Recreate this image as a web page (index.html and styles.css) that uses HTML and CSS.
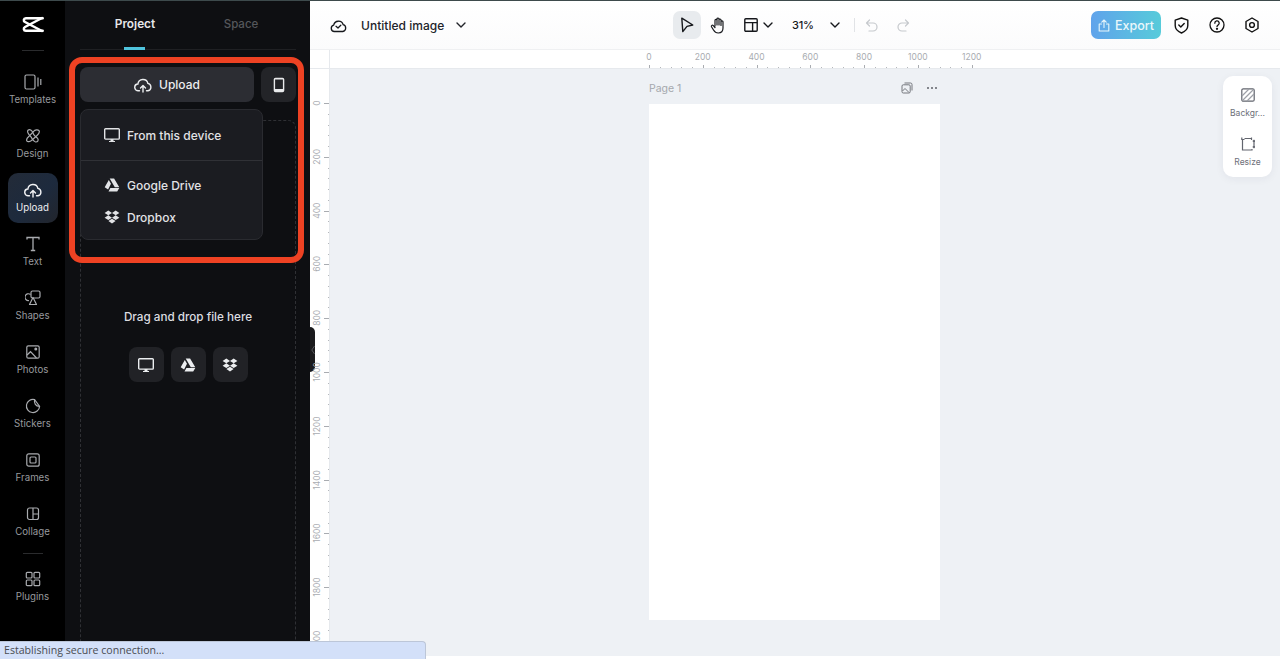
FILE: index.html
```html
<!DOCTYPE html>
<html lang="en">
<head>
<meta charset="utf-8">
<title>Untitled image</title>
<link rel="stylesheet" href="styles.css">
</head>
<body>
<svg class="defs" width="0" height="0" aria-hidden="true">
  <defs>
    <symbol id="i-monitor" viewBox="0 0 16 16"><path d="M1.600 1.700h12.800a.9.9 0 0 1 .9.9v8.600a.9.9 0 0 1-.9.9H1.600a.9.9 0 0 1-.9-.9V2.600a.9.9 0 0 1 .9-.9z" fill="none" stroke="currentColor" stroke-width="1.400"/><path d="M5 14h6v.9H5zM6.500 12h3v2h-3z" fill="currentColor"/></symbol>
    <symbol id="i-drive" viewBox="0 0 16 16"><path d="M5.700 1.500h4.400l5.200 8.700h-4.500zM4.800 2.900l2.200 3.900-2.900 5.600L.7 10.300zM6.400 10.900h8.900l-2.100 3.500H4.500z" fill="currentColor"/></symbol>
    <symbol id="i-dropbox" viewBox="0 0 16 16"><path d="M4.300 1.500 8 3.900 4.300 6.300.6 3.900zM11.700 1.500 15.400 3.900 11.700 6.300 8 3.900zM4.300 6.300 8 8.700 4.300 11.100.6 8.700zM11.700 6.300 15.400 8.700 11.700 11.100 8 8.700zM4.400 12 8 9.700l3.600 2.300L8 14.500z" fill="currentColor"/></symbol>
    <symbol id="i-upcloud" viewBox="0 0 18 16"><path d="M5.500 13.800H4.400A3.400 3.400 0 0 1 3.900 7a5.100 5.100 0 0 1 10-.6 3.800 3.800 0 0 1 .1 7.400h-1.500" fill="none" stroke="currentColor" stroke-width="1.400" stroke-linecap="round"/><path d="M9 15V9M6.500 11 9 8.500l2.500 2.500" fill="none" stroke="currentColor" stroke-width="1.400" stroke-linecap="round" stroke-linejoin="round"/></symbol>
    <symbol id="i-chev" viewBox="0 0 10 6"><path d="M1 1l4 4 4-4" fill="none" stroke="currentColor" stroke-width="1.400" stroke-linecap="round" stroke-linejoin="round"/></symbol>
  </defs>
</svg>
<div class="app">
  <nav class="rail">
    <div class="logo">
      <svg width="22" height="17" viewBox="0 0 22 17" fill="none" stroke="#fff" stroke-width="2.500" stroke-linecap="round"><path d="M20.700 2.300H3.800C1.500 2.300 1.200 5 3 6l17 9"/><path d="M20.700 14.700H3.800C1.500 14.700 1.200 12 3 11l17-9"/></svg>
    </div>
    <a class="nav-item">
      <svg width="18" height="16" viewBox="0 0 18 16" fill="none" stroke="currentColor" stroke-width="1.200"><rect x="1" y="1" width="10" height="14" rx="1.500"/><path d="M14 3.500v9M16.800 5v6"/></svg>
      <span>Templates</span>
    </a>
    <a class="nav-item">
      <svg width="16" height="16" viewBox="0 0 16 16" fill="none" stroke="currentColor" stroke-width="1.200"><path d="M3 2.200c2-1.500 4.500.5 5 3 .5 2.500 3 3.500 4.500 5 1.500 2 .2 4-2 3.800-2.300-.3-3-2.600-4-4.400C5.500 7.800 1 5 3 2.200z"/><path d="M8.500 3.500c1.500-2 4.500-2.200 5.500-.8 1 1.500-.5 3.500-2 4.800l-5.500 5c-1.500 1.200-3.800 1.500-4.500.6-1-1.300.3-3.300 2-4.800z"/></svg>
      <span>Design</span>
    </a>
    <a class="nav-item active">
      <svg width="18" height="16"><use href="#i-upcloud"/></svg>
      <span>Upload</span>
    </a>
    <a class="nav-item">
      <svg width="16" height="16" viewBox="0 0 16 16" fill="none" stroke="currentColor" stroke-width="1.300"><path d="M2 3.500V1.500h12v2M8 1.500v13M5.800 14.500h4.400"/></svg>
      <span>Text</span>
    </a>
    <a class="nav-item">
      <svg width="16" height="16" viewBox="0 0 16 16" fill="none" stroke="currentColor" stroke-width="1.200"><path d="M5.500 4.500A3.400 3.400 0 1 0 4 10.500"/><rect x="6" y="1" width="9" height="7" rx="1.500"/><path d="M8 7.500l3.500 7h-7z" stroke-linejoin="round"/></svg>
      <span>Shapes</span>
    </a>
    <a class="nav-item">
      <svg width="16" height="16" viewBox="0 0 16 16" fill="none" stroke="currentColor" stroke-width="1.200"><rect x="1.800" y="1.800" width="12.400" height="12.400" rx="1.500"/><circle cx="10.800" cy="5" r=".9" fill="currentColor"/><path d="M2 11l3.500-3.300 6 6.300"/></svg>
      <span>Photos</span>
    </a>
    <a class="nav-item">
      <svg width="16" height="16" viewBox="0 0 16 16" fill="none" stroke="currentColor" stroke-width="1.200"><path d="M9.500 1.500A6.600 6.600 0 1 0 14.600 8.500z"/><path d="M9.500 1.500c-.5 4 1 6.500 5.100 7"/></svg>
      <span>Stickers</span>
    </a>
    <a class="nav-item">
      <svg width="16" height="16" viewBox="0 0 16 16" fill="none" stroke="currentColor" stroke-width="1.200"><rect x="1.800" y="1.800" width="12.400" height="12.400" rx="2"/><rect x="5" y="5" width="6" height="6" rx="1"/></svg>
      <span>Frames</span>
    </a>
    <a class="nav-item">
      <svg width="16" height="16" viewBox="0 0 16 16" fill="none" stroke="currentColor" stroke-width="1.200"><rect x="2.500" y="2" width="11" height="11.500" rx="2"/><path d="M8 2v11.500M8 8h5.500"/></svg>
      <span>Collage</span>
    </a>
    <div class="rail-sep"></div>
    <a class="nav-item">
      <svg width="16" height="16" viewBox="0 0 16 16" fill="none" stroke="currentColor" stroke-width="1.200"><rect x="1.300" y="1.300" width="5.700" height="5.700" rx="1"/><rect x="9" y="1.300" width="5.700" height="5.700" rx="1"/><rect x="1.300" y="9" width="5.700" height="5.700" rx="1"/><rect x="9" y="9" width="5.700" height="5.700" rx="1"/></svg>
      <span>Plugins</span>
    </a>
  </nav>

  <aside class="panel">
    <div class="tabs">
      <div class="tab current">Project</div>
      <div class="tab">Space</div>
    </div>
    <div class="upload-row">
      <button class="upload-btn">
        <svg width="18" height="16"><use href="#i-upcloud"/></svg>
        Upload
      </button>
      <button class="phone-btn">
        <svg width="12" height="16" viewBox="0 0 12 16"><path fill-rule="evenodd" d="M2.500.7h7A1.800 1.800 0 0 1 11.300 2.500v11a1.800 1.800 0 0 1-1.800 1.800h-7A1.800 1.800 0 0 1 .7 13.500v-11A1.800 1.800 0 0 1 2.500.7zM2.100 2.400v9.700h7.800V2.400z" fill="currentColor"/></svg>
      </button>
    </div>
    <div class="dropzone">
      <p class="drop-text">Drag and drop file here</p>
      <div class="drop-actions">
        <span class="drop-btn"><svg width="16" height="16"><use href="#i-monitor"/></svg></span>
        <span class="drop-btn"><svg width="16" height="16"><use href="#i-drive"/></svg></span>
        <span class="drop-btn"><svg width="16" height="16"><use href="#i-dropbox"/></svg></span>
      </div>
    </div>

    <div class="menu">
      <div class="menu-group first">
        <div class="menu-row"><svg width="16" height="16"><use href="#i-monitor"/></svg>From this device</div>
      </div>
      <div class="menu-group">
        <div class="menu-row"><svg width="16" height="16"><use href="#i-drive"/></svg>Google Drive</div>
        <div class="menu-row"><svg width="16" height="16"><use href="#i-dropbox"/></svg>Dropbox</div>
      </div>
    </div>
    <div class="highlight"></div>
    <div class="handle"><svg width="4" height="10" viewBox="0 0 4 10"><path d="M3.500 1 .8 5l2.700 4" fill="none" stroke="#55565a" stroke-width="1"/></svg></div>
  </aside>

  <main class="work">
    <header class="topbar">
      <div class="doc">
        <svg class="doc-cloud" width="17" height="15" viewBox="0 0 17 15" fill="none" stroke="#16181c" stroke-width="1.300"><path d="M4.300 13.500a3.200 3.200 0 0 1-.6-6.300 4.900 4.900 0 0 1 9.500-.5 3.500 3.500 0 0 1-.4 6.800z" stroke-linejoin="round"/><path d="M6 8.300l2 1.700 2.800-2.800" stroke-linecap="round" stroke-linejoin="round"/></svg>
        <span class="doc-name">Untitled image</span>
        <svg class="doc-chev" width="10" height="6"><use href="#i-chev"/></svg>
      </div>
      <div class="tools">
        <span class="tool selected"><svg width="14" height="16" viewBox="0 0 14 16" fill="none" stroke="#16181c" stroke-width="1.400" stroke-linejoin="round"><path d="M1.800 1.200 12.800 8 7 9.400 2.800 14.600z"/></svg></span>
        <span class="tool hand"><svg width="16" height="17" viewBox="0 0 16 17" fill="none" stroke="#16181c" stroke-width="1.200" stroke-linecap="round" stroke-linejoin="round"><path d="M5 9V3.300a1 1 0 0 1 2 0V8M7 8V2a1 1 0 0 1 2 0v6M9 8V3a1 1 0 0 1 2 0v5.500M11 8.500V4.800a1 1 0 0 1 2 0V11c0 3-2 5-4.800 5-2.400 0-3.500-1-4.700-3L1.500 9.800c-.6-1.200.9-2.200 1.800-1.200L5 10.500"/></svg></span>
        <span class="tool layout">
          <svg width="14" height="14" viewBox="0 0 14 14" fill="none" stroke="#16181c" stroke-width="1.400"><rect x=".8" y=".8" width="12.400" height="12.400" rx="1"/><path d="M.8 4.600h12.400M8.600 4.600v8.600"/></svg>
          <svg width="10" height="6"><use href="#i-chev"/></svg>
        </span>
        <span class="zoom-val">31%</span>
        <svg class="zoom-chev" width="10" height="6"><use href="#i-chev"/></svg>
        <span class="tool-sep"></span>
        <svg class="undo" width="14" height="13" viewBox="0 0 14 13" fill="none" stroke="#c6c9cd" stroke-width="1.200" stroke-linecap="round" stroke-linejoin="round"><path d="M4.500 1 1.500 4l3 3M1.500 4H8a4 4 0 0 1 0 8H4"/></svg>
        <svg class="redo" width="14" height="13" viewBox="0 0 14 13" fill="none" stroke="#c6c9cd" stroke-width="1.200" stroke-linecap="round" stroke-linejoin="round"><path d="M9.500 1l3 3-3 3M12.500 4H6a4 4 0 0 0 0 8h4"/></svg>
      </div>
      <div class="actions">
        <button class="export">
          <svg width="12" height="13" viewBox="0 0 12 13" fill="none" stroke="#e8f6fb" stroke-width="1.100" stroke-linecap="round" stroke-linejoin="round"><path d="M3.500 5H1.200v7h9.600V5H8.500M6 8.500V1M3.800 3.200 6 1l2.200 2.200"/></svg>
          Export
        </button>
        <svg class="act" width="15" height="17" viewBox="0 0 15 17" fill="none" stroke="#111" stroke-width="1.400" stroke-linejoin="round" stroke-linecap="round"><path d="M7.500 1l6.300 2.200v5.300c0 3.400-2.500 5.900-6.300 7.500C3.700 14.400 1.200 11.900 1.200 8.500V3.200z"/><path d="M4.800 8l2 2 3.400-3.500"/></svg>
        <svg class="act" width="16" height="16" viewBox="0 0 16 16" fill="none" stroke="#111" stroke-width="1.300" stroke-linecap="round"><circle cx="8" cy="8" r="7"/><path d="M5.800 6.200A2.200 2.200 0 1 1 9 8.100c-.7.400-1 .8-1 1.500"/><circle cx="8" cy="11.800" r=".5" fill="#111"/></svg>
        <svg class="act" width="14" height="16" viewBox="0 0 14 16" fill="none" stroke="#111" stroke-width="1.400" stroke-linejoin="round"><path d="M7 1l6 3.500v7L7 15l-6-3.500v-7z"/><circle cx="7" cy="8" r="2.400"/></svg>
      </div>
    </header>
    <div class="ruler-h">
      <div class="ruler-corner"></div>
      <div class="ruler-h-track">
        <div class="h-labels">
          <span>0</span><span>200</span><span>400</span><span>600</span><span>800</span><span>1000</span><span>1200</span>
        </div>
        <div class="h-ticks"></div>
      </div>
    </div>
    <div class="stage">
      <div class="ruler-v">
        <div class="v-labels">
          <span>0</span><span>200</span><span>400</span><span>600</span><span>800</span><span>1000</span><span>1200</span><span>1400</span><span>1600</span><span>1800</span><span>2000</span>
        </div>
        <div class="v-ticks"></div>
      </div>
      <div class="canvas">
        <div class="page-wrap">
          <div class="page-head">
            <span class="page-name">Page 1</span>
            <svg class="page-ic" width="12" height="12" viewBox="0 0 12 12" fill="none" stroke="#74777d" stroke-width="1"><rect x="1" y="2.800" width="8.200" height="8.200" rx="1.300"/><path d="M3.500 1h6a1.500 1.500 0 0 1 1.500 1.500v6M1.500 9l2.500-2.500 4 4"/></svg>
            <span class="page-more"><i></i><i></i><i></i></span>
          </div>
          <div class="page"></div>
        </div>
        <div class="side-tools">
          <div class="side-tool">
            <svg width="14" height="14" viewBox="0 0 14 14" fill="none" stroke="#62656e" stroke-width="1.200"><rect x=".8" y=".8" width="12.400" height="12.400" rx="1.500"/><path d="M1 8l7-7M1.500 12.500 12.500 1.500M6 13l7-7" stroke="#9da0a7"/></svg>
            <span>Backgr...</span>
          </div>
          <div class="side-tool">
            <svg width="14" height="14" viewBox="0 0 14 14" fill="none" stroke="#62656e" stroke-width="1.200"><path d="M3.500 2.500h-2v10.500h9.500v-1"/><path d="M.8.500v2.500M3.500 1.500h6.500M10.500.500v2.500M13 3.500v7M11.800 4.500 13 3.300l1.200 1.200M11.800 9.500 13 10.700l1.200-1.200"/></svg>
            <span>Resize</span>
          </div>
        </div>
      </div>
    </div>
    <div class="foot-strip"></div>
  </main>
</div>
<div class="status">Establishing secure connection...</div>
</body>
</html>
```

FILE: styles.css
```css
* { box-sizing: border-box; }
html, body { margin: 0; height: 100%; overflow: hidden; }
body { font-family: Inter, "Noto Sans", sans-serif; background: #fff; color: #16181c; }
.defs { position: absolute; }
svg { display: block; flex: none; }
button { font: inherit; border: 0; padding: 0; }

.app { display: flex; height: 659px; border-top: 1px solid #3d4a4c; }

/* left rail */
.rail { width: 65px; flex: none; background: #000; display: flex; flex-direction: column; align-items: center; color: #8f9195; }
.logo { width: 100%; height: 62px; display: flex; flex-direction: column; align-items: center; padding-top: 15px; }
.logo::after { content: ""; width: 22px; height: 1px; background: #2a2b2d; margin-top: 17px; }
.nav-item { width: 50px; height: 50px; margin: 2px 0; border-radius: 10px; display: flex; flex-direction: column; align-items: center; justify-content: center; gap: 3px; font-size: 9.700px; line-height: 14px; color: #97999d; }
.nav-item svg { color: #a9abaf; }
.nav-item.active { background: linear-gradient(135deg, #232b38, #1d2a3d 55%, #22252c); color: #eceef1; }
.nav-item.active svg { color: #f2f3f5; }
.rail-sep { width: 20px; height: 1px; background: #2a2b2d; margin: 4px 0 6px; }

/* project panel */
.panel { width: 245px; flex: none; background: #0e0f12; position: relative; display: flex; flex-direction: column; padding: 0 14px 0 15px; }
.tabs { height: 49px; flex: none; display: flex; justify-content: center; border-bottom: 1px solid #1f2023; }
.tab { width: 106px; text-align: center; padding-top: 15px; font-size: 11.500px; font-weight: 500; line-height: 16px; color: #55575b; position: relative; }
.tab.current { color: #e7e8ea; font-weight: 600; font-size: 11.800px; }
.tab.current::after { content: ""; position: absolute; left: 42px; bottom: -1px; width: 21px; height: 3px; background: #4fc3dd; }
.upload-row { display: flex; gap: 7px; margin-top: 17px; flex: none; }
.upload-btn { width: 174px; height: 35px; background: #2c2d33; color: #eceef0; border-radius: 8px; display: flex; align-items: center; justify-content: center; gap: 7px; font-size: 12px; font-weight: 500; }
.phone-btn { width: 35px; height: 35px; background: #232428; color: #e9eaec; border-radius: 8px; display: flex; align-items: center; justify-content: center; }
.dropzone { margin-top: 18px; flex: 1; border: 1px dashed #2f3034; border-bottom: 0; border-radius: 8px 8px 0 0; display: flex; flex-direction: column; align-items: center; }
.drop-text { margin: 188px 0 0; font-size: 11.700px; line-height: 16px; font-weight: 500; color: #dcdde0; }
.drop-actions { display: flex; gap: 7px; margin-top: 22px; }
.drop-btn { width: 35px; height: 35px; border-radius: 8px; background: #212226; color: #eceef0; display: flex; align-items: center; justify-content: center; }

.menu { position: absolute; left: 15px; top: 108px; width: 183px; height: 131px; background: #1b1c21; border: 1px solid #2a2b30; border-radius: 8px; color: #e2e3e6; font-size: 12px; font-weight: 500; }
.menu-group { padding: 8px 23px; }
.menu-group.first { height: 51px; padding-top: 9px; border-bottom: 1px solid #303136; }
.menu-row { height: 32px; display: flex; align-items: center; gap: 7px; }
.highlight { position: absolute; left: 4px; top: 56px; width: 235px; height: 206px; border: 6px solid #ee4223; border-radius: 13px; pointer-events: none; }
.handle { position: absolute; right: -5px; top: 326px; width: 5px; height: 45px; background: #1b1b1d; border-radius: 0 5px 5px 0; display: flex; align-items: center; justify-content: center; }

/* work area */
.work { flex: 1; min-width: 0; display: flex; flex-direction: column; background: #fff; }
.topbar { height: 49px; flex: none; display: flex; align-items: center; padding: 0 20px; background: linear-gradient(#fff, #fbfbfc); border-bottom: 1px solid #eff0f2; }
.doc { display: flex; align-items: center; width: 343px; flex: none; }
.doc-cloud { margin-right: 14px; }
.doc-name { font-size: 12px; letter-spacing: .03px; font-weight: 500; color: #22242a; }
.doc-chev { margin-left: 12px; color: #22242a; }
.tools { display: flex; align-items: center; flex: none; }
.tool { display: flex; align-items: center; justify-content: center; }
.tool.selected { width: 28px; height: 28px; border-radius: 7px; background: #e8ebee; }
.tool.hand { width: 16px; margin-left: 9px; }
.tool.layout { gap: 5px; margin-left: 18px; }
.zoom-val { width: 20px; font-size: 11px; letter-spacing: -.2px; white-space: nowrap; font-weight: 500; margin-left: 19px; color: #16181c; }
.zoom-chev { margin-left: 18px; }
.tool-sep { width: 1px; height: 14px; background: #e1e3e6; margin-left: 14px; }
.undo { margin-left: 10px; }
.redo { margin-left: 17px; }
.actions { margin-left: auto; display: flex; align-items: center; }
.export { width: 70px; height: 28px; border-radius: 7px; background: linear-gradient(90deg, #60a3eb, #57cbda); color: #eaf7fb; display: flex; align-items: center; justify-content: center; gap: 5px; font-size: 12.500px; font-weight: 500; margin-right: 13px; }
.act { margin-right: 20px; }
.act:last-child { margin-right: 1px; }

.ruler-h { height: 19px; flex: none; display: flex; background: #fff; border-bottom: 1px solid #e6e9ed; }
.ruler-corner { width: 20px; flex: none; border-right: 1px solid #e6e9ed; }
.ruler-h-track { margin-left: 292px; width: 380px; display: flex; flex-direction: column; }
.h-labels { display: flex; height: 15px; flex: none; }
.h-labels span { width: 53.800px; text-align: center; font-size: 8.500px; line-height: 15px; color: #a9acb1; }
.h-ticks { margin-left: 27px; width: 324px; flex: 1; background:
  repeating-linear-gradient(90deg, #a9acb1 0 1px, transparent 1px 53.800px) 0 0 / 100% 100% no-repeat,
  repeating-linear-gradient(90deg, #b4b7bb 0 1px, transparent 1px 10.760px) 0 100% / 100% 1px no-repeat; }

.stage { flex: 1; min-height: 0; display: flex; background: #eef1f5; }
.ruler-v { width: 20px; flex: none; background: #fff; border-right: 1px solid #e6e9ed; display: flex; overflow: hidden; }
.v-labels { width: 14px; flex: none; padding-top: 7px; display: flex; flex-direction: column; }
.v-labels span { height: 53.800px; flex: none; writing-mode: vertical-rl; transform: rotate(180deg); text-align: center; font-size: 8.500px; line-height: 14px; color: #a9acb1; padding-left: 3px; }
.v-ticks { flex: 1; margin-top: 34px; background:
  repeating-linear-gradient(180deg, #a9acb1 0 1px, transparent 1px 53.800px) 0 0 / 100% 100% no-repeat,
  repeating-linear-gradient(180deg, #b4b7bb 0 1px, transparent 1px 10.760px) 100% 0 / 1px 100% no-repeat; }
.canvas { flex: 1; position: relative; padding: 7px 0 0 319px; }
.page-wrap { width: 291px; }
.page-head { height: 28px; display: flex; align-items: center; font-size: 10.500px; color: #a5a8ad; padding-bottom: 4px; }
.page-name { flex: 1; }
.page-ic { margin-right: 14px; }
.page-more { display: flex; gap: 2px; margin-right: 3px; }
.page-more i { width: 2px; height: 2px; border-radius: 50%; background: #5f6268; }
.page { height: 516px; background: #fff; }
.side-tools { position: absolute; right: 8px; top: 7px; width: 49px; height: 101px; background: #fff; border-radius: 10px; box-shadow: 0 2px 8px rgba(30, 40, 60, .06); display: flex; flex-direction: column; align-items: center; padding-top: 12px; gap: 11px; }
.side-tool { height: 38px; display: flex; flex-direction: column; align-items: center; gap: 5px; font-size: 8.500px; line-height: 12px; color: #6d7079; }
.foot-strip { height: 3px; flex: none; background: #fff; }

.status { position: fixed; left: 0; bottom: 0; width: 426px; height: 18px; background: #d3e0f9; border-top: 1px solid #bcc6d8; border-right: 1px solid #bcc6d8; border-radius: 0 4px 0 0; font-family: "Open Sans", sans-serif; font-size: 10.600px; line-height: 17px; padding-left: 4px; color: #494c52; }
```
